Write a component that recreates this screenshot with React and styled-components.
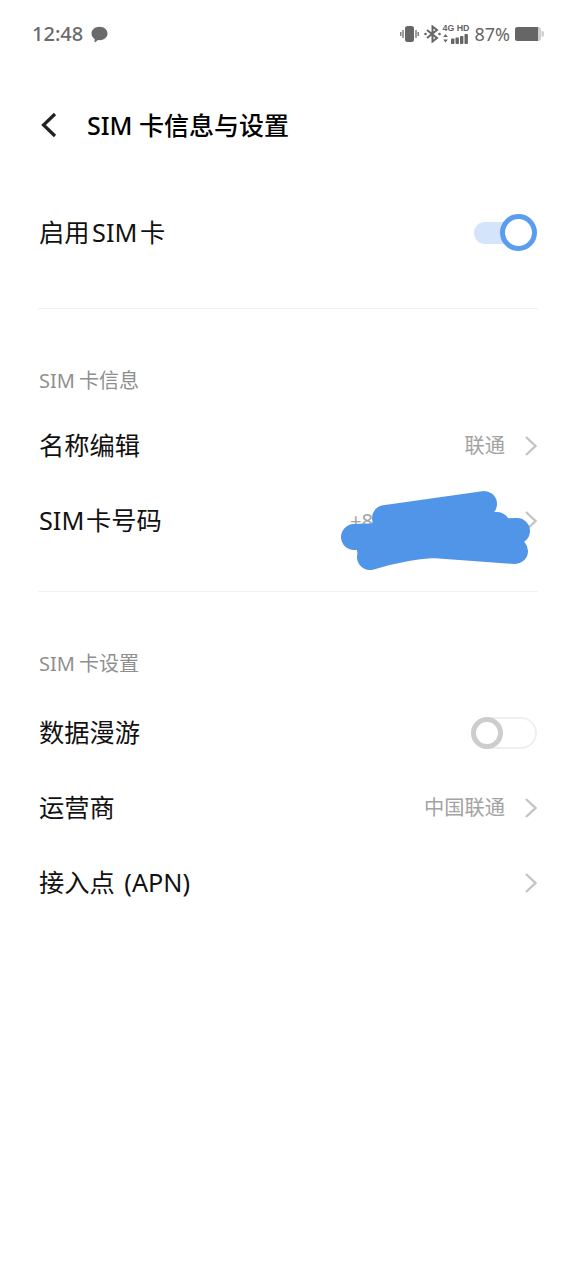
import React from "react";
import styled, { createGlobalStyle } from "styled-components";

const GlobalStyle = createGlobalStyle`
  html, body {
    margin: 0;
    padding: 0;
    background: #fff;
  }
  body {
    font-family: "Noto Sans", "Noto Sans CJK SC", sans-serif;
  }
`;

const Chevron = () => (
  <ChevronIcon viewBox="0 0 14 22">
    <path d="M2 2l9.5 9L2 20" />
  </ChevronIcon>
);

const Row = ({ label, value, spacing, valueWidth, children }) => (
  <RowBox>
    <RowLabel $spacing={spacing}>{label}</RowLabel>
    <RowRight>
      {value && <RowValue $width={valueWidth}>{value}</RowValue>}
      {children || <Chevron />}
    </RowRight>
  </RowBox>
);

const App = () => {
  return (
    <Page>
      <GlobalStyle />
      <StatusBar>
        <StatusLeft>
          <Time>12:48</Time>
          <svg width="17" height="17" viewBox="0 0 17 17">
            <path
              fill="#6a6a6a"
              d="M8.500.8c4.500 0 8 2.900 8 6.700s-3.500 6.700-8 6.700c-.5 0-1-.05-1.500-.1l-2.800 2.100c-.4.300-.8 0-.7-.4l.2-2.700C1.900 11.900.5 9.900.5 7.500.5 3.700 4 .8 8.500.8z"
            />
          </svg>
        </StatusLeft>
        <StatusRight>
          <svg width="19" height="18" viewBox="0 0 19 18">
            <rect x="5" y="1" width="9" height="16" rx="2.500" fill="#666" />
            <path stroke="#777" strokeWidth="1.400" d="M3 5v8M16 5v8M.8 7v4M18.200 7v4" />
          </svg>
          <BluetoothIcon width="17" height="18" viewBox="0 0 17 18">
            <path d="M3 5l10 8-4.500 3.500v-15L13 5 3 13" />
            <circle cx="1.500" cy="9" r="1.300" />
            <circle cx="15.500" cy="9" r="1.300" />
          </BluetoothIcon>
          <NetworkBlock>
            <NetworkText>4G HD</NetworkText>
            <svg width="26" height="10" viewBox="0 0 26 10">
              <path fill="#666" d="M2.500 0l2.300 3H.2zM.2 5.500h4.600l-2.300 3z" />
              <rect x="8" y="4.500" width="3.400" height="5.500" rx=".8" fill="#666" />
              <rect x="12.500" y="3.500" width="3.400" height="6.500" rx=".8" fill="#666" />
              <rect x="17" y="2" width="3.400" height="8" rx=".8" fill="#666" />
              <rect x="21.500" y="0" width="3.400" height="10" rx=".8" fill="#666" />
            </svg>
          </NetworkBlock>
          <Percent>87%</Percent>
          <svg width="29" height="14" viewBox="0 0 29 14">
            <rect x="0" y="0" width="26" height="14" rx="2.500" fill="#d0d0d0" />
            <path d="M2.500 0H23v14H2.500A2.500 2.500 0 0 1 0 11.500v-9A2.500 2.500 0 0 1 2.500 0z" fill="#666" />
            <path d="M26.500 4h.5a2 2 0 0 1 2 2v2a2 2 0 0 1-2 2h-.5z" fill="#d0d0d0" />
          </svg>
        </StatusRight>
      </StatusBar>

      <Header>
        <BackIcon viewBox="0 0 18 26">
          <path d="M15 2L3.500 13 15 24" />
        </BackIcon>
        <Title>SIM 卡信息与设置</Title>
      </Header>

      <ToggleSection>
        <RowBox>
          <RowLabel $spacing={-4}>启用 SIM 卡</RowLabel>
          <OnToggle />
        </RowBox>
      </ToggleSection>

      <Section>
        <SectionLabel>SIM 卡信息</SectionLabel>
        <Row label="名称编辑" value="联通" />
        <Row label="SIM 卡号码" value="+8" valueWidth={155} spacing={-5}>
          <Chevron />
          <Scribble viewBox="0 0 210 100">
            <path d="M55 38L154 24M55 45L167 45M24 57L187 51M40 77C60 71 80 66 103 65L185 71M40 70L110 60" />
          </Scribble>
        </Row>
      </Section>

      <LastSection>
        <LastLabel>SIM 卡设置</LastLabel>
        <Row label="数据漫游">
          <OffToggle />
        </Row>
        <Row label="运营商" value="中国联通" />
        <Row label="接入点 (APN)" spacing={3} />
      </LastSection>
    </Page>
  );
};

const Page = styled.div`
  width: 576px;
  height: 1280px;
  background: #fff;
  overflow: hidden;
`;

const StatusBar = styled.div`
  display: flex;
  justify-content: space-between;
  align-items: center;
  height: 68px;
  padding: 0 32px 0 32px;
`;

const StatusLeft = styled.div`
  display: flex;
  align-items: center;
  gap: 8px;
`;

const Time = styled.span`
  font-size: 20px;
  line-height: 26px;
  font-weight: 500;
  color: #6a6a6a;
`;

const StatusRight = styled.div`
  display: flex;
  align-items: center;
  gap: 5px;
`;

const BluetoothIcon = styled.svg`
  margin-right: -3px;
  path {
    fill: none;
    stroke: #666;
    stroke-width: 2;
  }
  circle {
    fill: #666;
  }
`;

const NetworkBlock = styled.div`
  display: flex;
  flex-direction: column;
  align-items: flex-end;
  gap: 2px;
  width: 26px;
`;

const NetworkText = styled.span`
  font-family: "Liberation Sans", sans-serif;
  font-size: 8.800px;
  line-height: 8px;
  font-weight: 700;
  color: #666;
  white-space: nowrap;
`;

const Percent = styled.span`
  font-size: 18px;
  line-height: 22px;
  color: #666;
`;

const Header = styled.div`
  display: flex;
  align-items: center;
  height: 114px;
  padding-left: 40px;
`;

const BackIcon = styled.svg`
  width: 18px;
  height: 26px;
  margin-right: 29px;
  path {
    fill: none;
    stroke: #222;
    stroke-width: 3.200;
  }
`;

const Title = styled.h1`
  margin: 0;
  font-size: 25px;
  line-height: 34px;
  font-weight: 500;
  color: #000;
`;

const ToggleSection = styled.div`
  margin: 0 38px;
  padding: 13px 0 38px;
  border-bottom: 1px solid #f0f0f0;
`;

const Section = styled.div`
  margin: 0 38px;
  padding: 53px 0 33px;
  border-bottom: 1px solid #f0f0f0;
`;

const LastSection = styled(Section)`
  border-bottom: none;
`;

const SectionLabel = styled.div`
  padding-left: 1px;
  font-size: 20px;
  line-height: 38px;
  color: #8f8f8f;
  word-spacing: -1px;
  margin-bottom: 8px;
`;

const LastLabel = styled(SectionLabel)`
  margin-bottom: 12px;
`;

const RowBox = styled.div`
  position: relative;
  display: flex;
  justify-content: space-between;
  align-items: center;
  height: 75px;
`;

const RowLabel = styled.span`
  padding: 0 0 2px 1px;
  font-size: 25.250px;
  line-height: 34px;
  color: #111;
  word-spacing: ${(p) => p.$spacing || 0}px;
`;

const RowRight = styled.div`
  display: flex;
  align-items: center;
  gap: 19px;
`;

const RowValue = styled.span`
  width: ${(p) => (p.$width ? `${p.$width}px` : "auto")};
  padding-bottom: 1px;
  font-size: 20.250px;
  line-height: 28px;
  color: #a3a3a3;
`;

const ChevronIcon = styled.svg`
  width: 14px;
  height: 22px;
  path {
    fill: none;
    stroke: #c4c4c4;
    stroke-width: 2.400;
  }
`;

const OnToggle = styled.div`
  position: relative;
  width: 63px;
  height: 22px;
  margin-right: 1px;
  border-radius: 11px 0 0 11px;
  background: linear-gradient(90deg, #d3e4fb 60%, transparent 60%);
  &::after {
    content: "";
    position: absolute;
    box-sizing: border-box;
    top: -8px;
    left: 26px;
    width: 37px;
    height: 37px;
    border-radius: 50%;
    background: #fff;
    border: 5px solid #5a9cf0;
  }
`;

const OffToggle = styled.div`
  position: relative;
  box-sizing: border-box;
  width: 66px;
  height: 32px;
  margin-right: 1px;
  border-radius: 16px;
  background: #fff;
  border: 2px solid #efefef;
  &::after {
    content: "";
    position: absolute;
    box-sizing: border-box;
    top: -2px;
    left: -2px;
    width: 32px;
    height: 32px;
    border-radius: 50%;
    background: #fff;
    border: 5px solid #cdcdcd;
  }
`;

const Scribble = styled.svg`
  position: absolute;
  right: -2px;
  top: -3px;
  width: 210px;
  height: 100px;
  path {
    fill: none;
    stroke: #5195e8;
    stroke-width: 26;
    stroke-linecap: round;
    stroke-linejoin: round;
  }
`;

export default App;
